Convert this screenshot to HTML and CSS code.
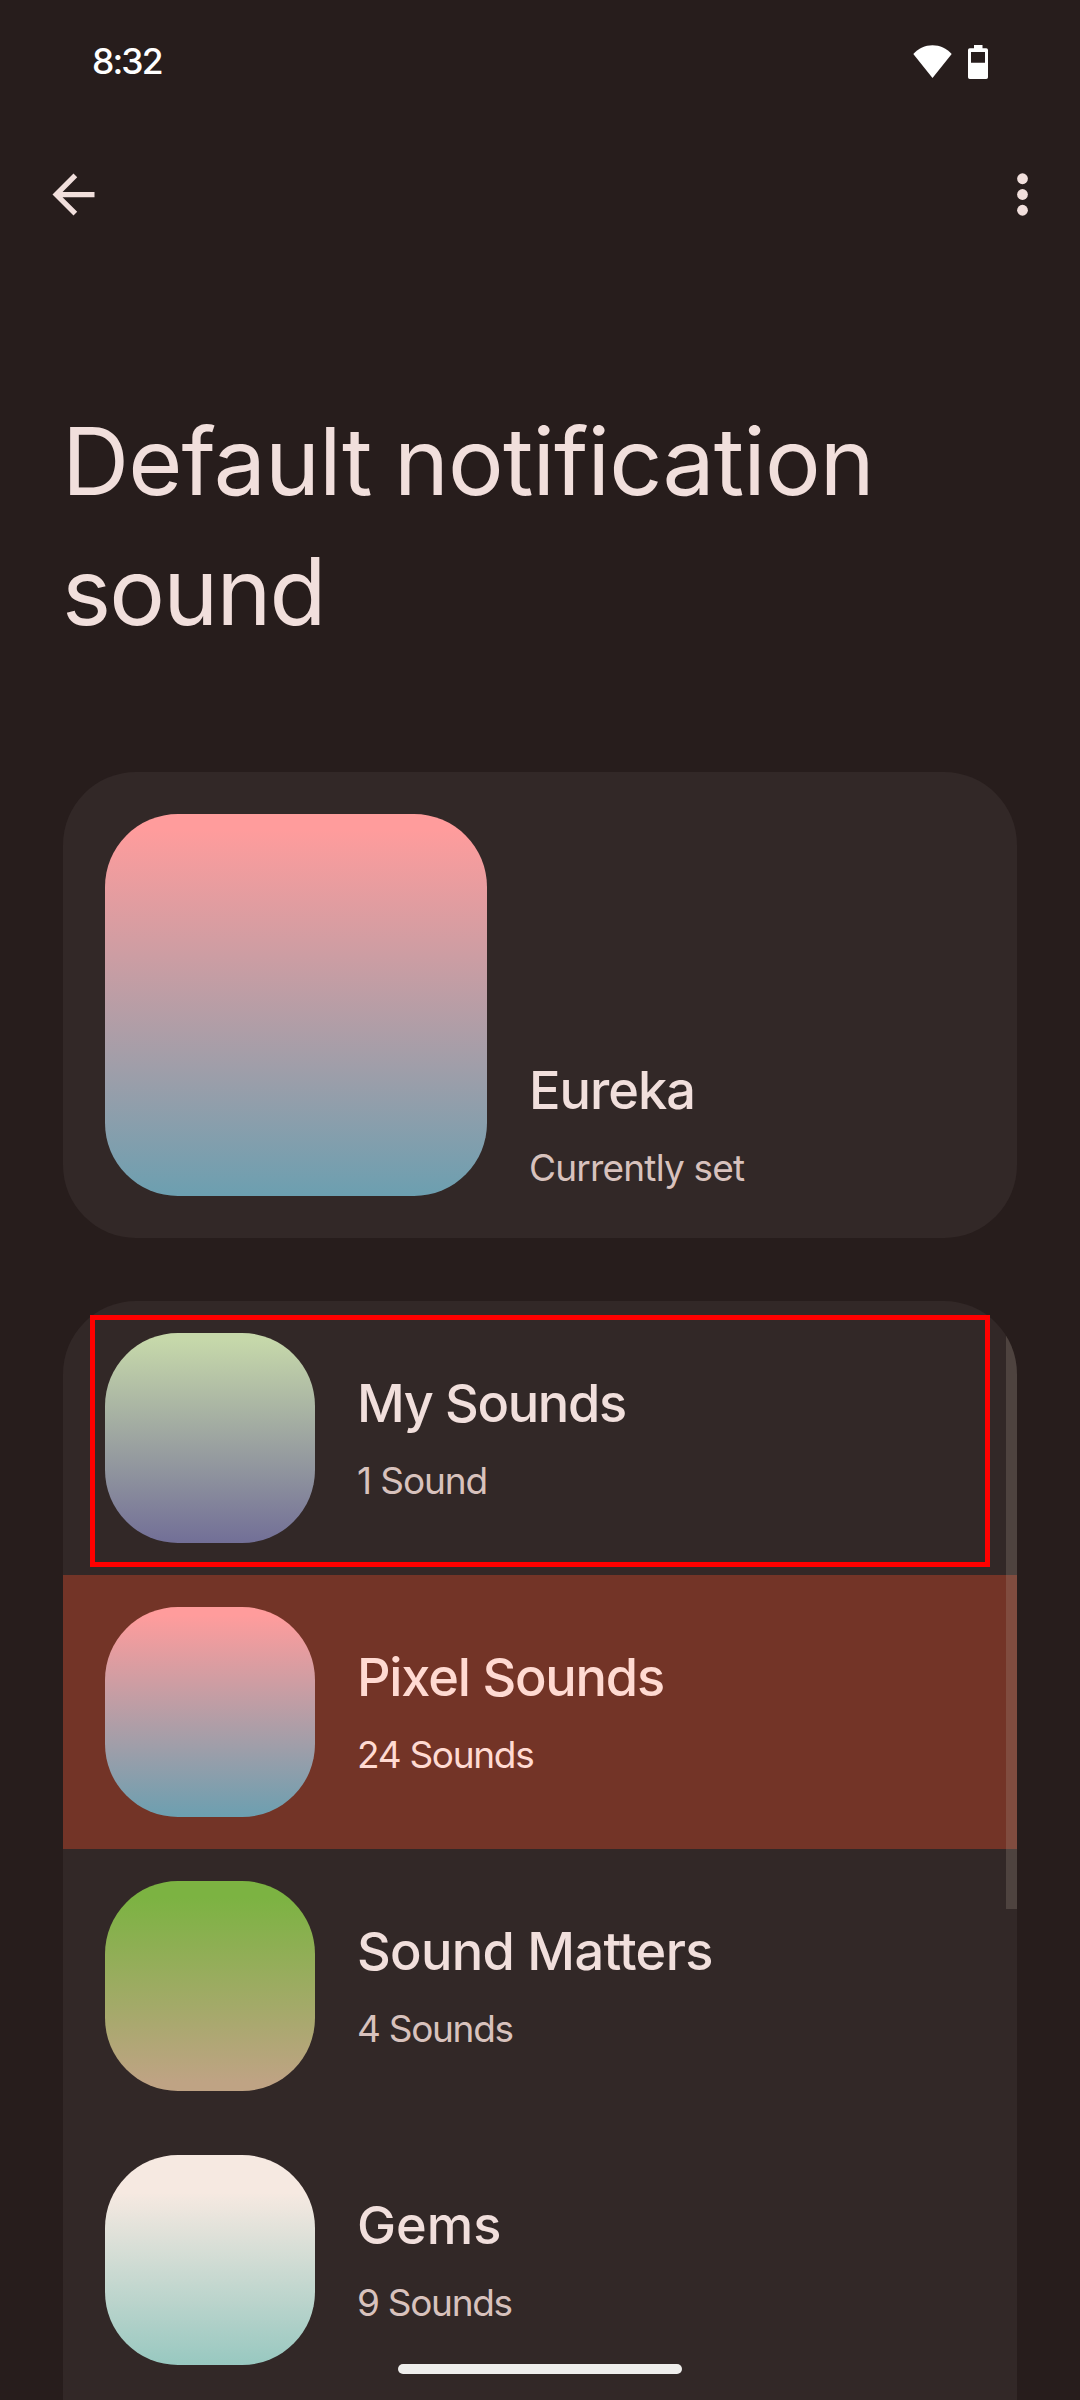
FILE: index.html
```html
<!DOCTYPE html>
<html lang="en">
<head>
<meta charset="utf-8">
<title>Default notification sound</title>
<link rel="stylesheet" href="styles.css">
</head>
<body>
<div class="screen">
  <header class="status-bar">
    <span class="clock">8:32</span>
    <div class="status-icons">
      <svg class="wifi" viewBox="0 0 40 34" aria-label="Wi-Fi"><path d="M19.500 33 0.300 9C5.500 3.300 12 0.300 19.500 0.300S33.500 3.300 38.700 9Z" fill="#fff"/></svg>
      <svg class="battery" viewBox="0 0 20 34" aria-label="Battery"><path fill-rule="evenodd" d="M6 0H14.500V3.300H18.200Q20 3.300 20 5.100V32.200Q20 34 18.200 34H1.800Q0 34 0 32.200V5.100Q0 3.300 1.800 3.300H6ZM3 7V17.800H17V7Z" fill="#fff"/></svg>
    </div>
  </header>
  <nav class="toolbar">
    <svg class="icon" viewBox="0 0 24 24" aria-label="Back"><path d="M20 11H7.830l5.590-5.590L12 4l-8 8 8 8 1.410-1.410L7.830 13H20z"/></svg>
    <svg class="icon" viewBox="0 0 24 24" aria-label="More options"><circle cx="12" cy="6" r="2.050"/><circle cx="12" cy="12" r="2.050"/><circle cx="12" cy="18" r="2.050"/></svg>
  </nav>
  <h1 class="title"><span class="title-first">Default notification</span><br><span class="title-second">sound</span></h1>
  <section class="current">
    <div class="art art-large art-pixel"></div>
    <div class="labels">
      <div class="name name-eureka">Eureka</div>
      <div class="detail detail-current">Currently set</div>
    </div>
  </section>
  <section class="list">
    <div class="row">
      <div class="art art-mine"></div>
      <div class="labels">
        <div class="name name-mine">My Sounds</div>
        <div class="detail detail-mine">1 Sound</div>
      </div>
    </div>
    <div class="row selected">
      <div class="art art-pixel"></div>
      <div class="labels">
        <div class="name">Pixel Sounds</div>
        <div class="detail">24 Sounds</div>
      </div>
    </div>
    <div class="row">
      <div class="art art-matters"></div>
      <div class="labels">
        <div class="name name-matters">Sound Matters</div>
        <div class="detail">4 Sounds</div>
      </div>
    </div>
    <div class="row">
      <div class="art art-gems"></div>
      <div class="labels">
        <div class="name name-gems">Gems</div>
        <div class="detail">9 Sounds</div>
      </div>
    </div>
    <div class="scrollbar"></div>
  </section>
  <div class="highlight"></div>
  <div class="home-pill"></div>
</div>
</body>
</html>
```
FILE: styles.css
```css
* { box-sizing: border-box; }

body {
  margin: 0;
  background: #271d1c;
  color: #f1dfdc;
  font-family: Inter, "Liberation Sans", sans-serif;
}

.screen {
  position: relative;
  display: flex;
  flex-direction: column;
  width: 1080px;
  height: 2400px;
  overflow: hidden;
}

.status-bar {
  display: flex;
  flex: none;
  justify-content: space-between;
  height: 124px;
  padding: 45px 92px 0;
  color: #fff;
}

.clock {
  height: 34px;
  font-size: 35.5px;
  font-weight: 500;
  line-height: 34px;
  letter-spacing: -1.9px;
}

.status-icons { display: flex; gap: 15px; }
.wifi { width: 40px; height: 34px; }
.battery { width: 20px; height: 34px; }

.toolbar {
  display: flex;
  flex: none;
  align-items: center;
  justify-content: space-between;
  height: 141px;
  padding: 0 26px 0 42px;
}

.icon { width: 63px; height: 63px; fill: #f1dfdc; }

.title {
  flex: none;
  height: 376px;
  margin: 131px 0 0;
  padding-left: 62px;
  font-size: 93px;
  font-weight: 400;
  line-height: 130px;
  white-space: nowrap;
}

.title-first { letter-spacing: -0.88px; word-spacing: -3px; }
.title-second { letter-spacing: -1.8px; }

.current {
  display: flex;
  flex: none;
  align-items: flex-end;
  gap: 42px;
  height: 466px;
  margin: 0 63px 63px;
  padding: 42px;
  border-radius: 73px;
  background: #322827;
}

.current .labels { padding-bottom: 4px; }

.list {
  position: relative;
  flex: none;
  height: 1099px;
  margin: 0 63px;
  border-radius: 73px 73px 0 0;
  background: #322827;
  overflow: hidden;
}

.row {
  display: flex;
  align-items: center;
  gap: 42px;
  height: 274px;
  padding: 0 42px;
}

.selected { background: #733427; color: #ffdad2; }

.art {
  flex: none;
  width: 210px;
  height: 210px;
  border-radius: 73px;
}

.art-large { width: 382px; height: 382px; }
.art-pixel { background: linear-gradient(#ff9c9c 4%, #6c9fb0); }
.art-mine { background: linear-gradient(#c6d8aa 3%, #726f97); }
.art-matters { background: linear-gradient(#7cb342 8%, #bfa384 96%); }
.art-gems { background: linear-gradient(#f6e9e1 18%, #98c8c0); }

.labels { display: flex; flex-direction: column; gap: 22px; }

.name {
  font-size: 52.3px;
  font-weight: 500;
  line-height: 64px;
  letter-spacing: -1.2px;
}

.name-eureka { letter-spacing: -1px; }
.name-mine { letter-spacing: -1.35px; }
.name-matters { letter-spacing: -0.7px; }
.name-gems { letter-spacing: 0; }

.detail {
  color: #d8c2bd;
  font-size: 37px;
  line-height: 48px;
  letter-spacing: -1.3px;
}

.detail-current { letter-spacing: -0.8px; }
.detail-mine { letter-spacing: -1.1px; }
.selected .detail { color: #ffdad2; }

.scrollbar {
  position: absolute;
  top: 0;
  right: 0;
  width: 11px;
  height: 608px;
  background: rgba(176, 166, 150, 0.22);
}

.highlight {
  position: absolute;
  left: 90px;
  top: 1315px;
  width: 900px;
  height: 252px;
  border: 5px solid #f00;
}

.home-pill {
  position: absolute;
  left: 398px;
  top: 2364px;
  width: 284px;
  height: 10px;
  border-radius: 5px;
  background: #efeeec;
}
```
